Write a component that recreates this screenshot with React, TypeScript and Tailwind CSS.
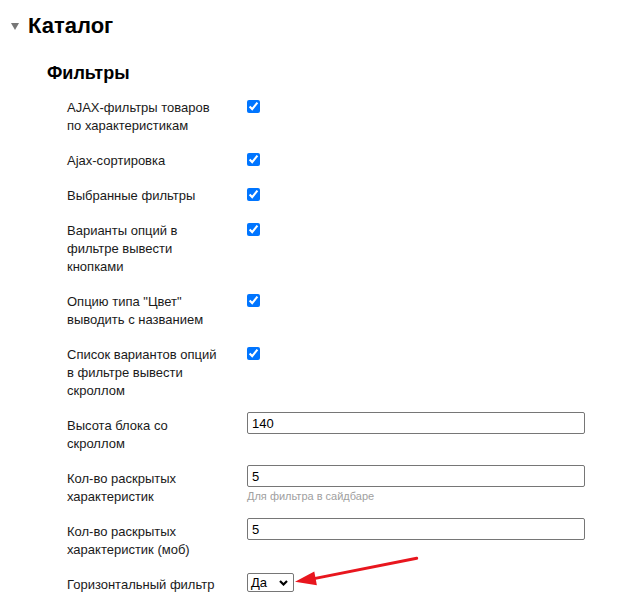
import type { ReactNode } from "react";

type RowProps = {
  label: ReactNode;
  children: ReactNode;
};

function Row({ label, children }: RowProps) {
  return (
    <div className="flex items-start">
      <div className="w-[160px] mr-[20px] leading-[18px]">{label}</div>
      <div className="flex flex-col">{children}</div>
    </div>
  );
}

function Check() {
  return <input type="checkbox" defaultChecked className="m-0 mt-[1px] w-[13px] h-[13px]" />;
}

function TextField({ value }: { value: string }) {
  return (
    <input
      type="text"
      defaultValue={value}
      className="-mt-[5px] h-[22px] w-[338px] rounded-[2px] border border-[#767676] bg-white px-[4px] text-[13px] text-black outline-none"
    />
  );
}

export default function App() {
  return (
    <div className="relative min-h-screen bg-white font-['Liberation_Sans',Arial,sans-serif] text-[13px] text-[#1a1a1a]">
      <div className="flex items-center pl-[11px] pt-[12px]">
        <svg width="8" height="7" viewBox="0 0 8 7" className="mr-[9px] mt-[1px]">
          <polygon points="0,0 8,0 4,7" fill="#777777" />
        </svg>
        <h1 className="text-[22px] leading-[28px] font-bold text-black">Каталог</h1>
      </div>

      <h2 className="mt-[22px] pl-[47px] text-[18px] leading-[22px] font-bold text-black">Фильтры</h2>

      <div className="mt-[15px] flex flex-col gap-[17px] pl-[67px]">
        <Row label="AJAX-фильтры товаров по характеристикам">
          <Check />
        </Row>
        <Row label="Ajax-сортировка">
          <Check />
        </Row>
        <Row label="Выбранные фильтры">
          <Check />
        </Row>
        <Row label="Варианты опций в фильтре вывести кнопками">
          <Check />
        </Row>
        <Row label={'Опцию типа "Цвет" выводить с названием'}>
          <Check />
        </Row>
        <Row label="Список вариантов опций в фильтре вывести скроллом">
          <Check />
        </Row>
        <Row label="Высота блока со скроллом">
          <TextField value="140" />
        </Row>
        <Row label="Кол-во раскрытых характеристик">
          <TextField value="5" />
          <span className="mt-[2px] text-[11px] leading-[14px] text-[#a0a0a0]">Для фильтра в сайдбаре</span>
        </Row>
        <Row label="Кол-во раскрытых характеристик (моб)">
          <TextField value="5" />
        </Row>
        <Row label="Горизонтальный фильтр">
          <div className="-mt-[3px] flex h-[19px] w-[47px] items-center justify-between rounded-[2px] border border-[#767676] bg-white pl-[3px] pr-[5px] text-[13px] text-black">
            <span>Да</span>
            <svg width="9" height="6" viewBox="0 0 9 6">
              <path d="M1 1 L4.5 4.5 L8 1" fill="none" stroke="#000" strokeWidth="2.2" />
            </svg>
          </div>
        </Row>
      </div>

      <svg
        width="130"
        height="42"
        viewBox="0 0 130 42"
        className="pointer-events-none absolute left-[290px] top-[550px]"
      >
        <line x1="126.7" y1="8.3" x2="24" y2="28.6" stroke="#e8161e" strokeWidth="3" strokeLinecap="round" />
        <polygon points="5,31.7 26.9,35.2 24.3,21.4" fill="#e8161e" />
      </svg>
    </div>
  );
}
